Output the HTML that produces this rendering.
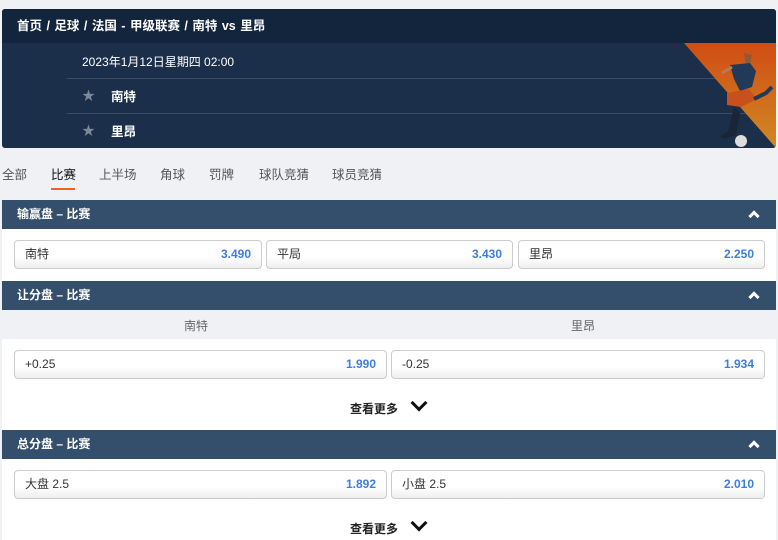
<!DOCTYPE html>
<html><head><meta charset="utf-8"><style>
*{margin:0;padding:0;box-sizing:border-box}
body{width:778px;height:540px;overflow:hidden;background:#f0f1f5;font-family:"Liberation Sans","Noto Sans CJK SC",sans-serif;font-size:12px;color:#222;position:relative}
.abs{position:absolute}
.hdr{left:2px;top:9px;width:774px;height:139px;background:#1b2e4a;border-radius:3px;overflow:hidden}
.bc{left:0;top:0;width:774px;height:34px;background:#13243d;color:#fff;font-weight:bold;font-size:12.5px;line-height:34px;padding-left:15px;word-spacing:1px}
.line{height:1px;background:#3a4d68;left:65px;width:709px}
.w{color:#fff}
.tab{top:164px;font-size:12.5px;color:#555}
.sec{left:2px;width:774px;height:29px;background:#344f6b;color:#fff;font-weight:bold;font-size:12px;line-height:29px;padding-left:15px}
.car{position:absolute;right:18px;top:12px;width:8px;height:8px;border-left:3px solid #fff;border-top:3px solid #fff;transform:rotate(45deg)}
.wh{left:2px;width:774px;background:#fff}
.btn{position:absolute;height:29px;border:1px solid #ccc;border-radius:4px;background:linear-gradient(#fff 60%,#eee);line-height:27px;padding:0 10px;font-size:12px;color:#333}
.btn b{float:right;color:#3b7de0;font-weight:bold}
.more{font-size:12px;font-weight:bold;color:#222}
.chev{display:inline-block;width:12px;height:12px;border-right:3px solid #111;border-bottom:3px solid #111;transform:rotate(45deg);margin-left:15px;position:relative;top:-4px}
.star{color:#7d8899;font-size:13px}
</style></head><body>
<div class="abs hdr">
<div class="abs bc">首页&nbsp;/&nbsp;足球&nbsp;/&nbsp;法国 - 甲级联赛&nbsp;/&nbsp;南特 vs 里昂</div>
<div class="abs w" style="left:80px;top:44px;font-size:12px">2023年1月12日星期四 02:00</div>
<div class="abs line" style="top:69px"></div>
<div class="abs line" style="top:104px"></div>
<div class="abs star" style="left:80px;top:76px">★</div>
<div class="abs w" style="left:109px;top:77px;font-weight:bold;font-size:12.5px">南特</div>
<div class="abs star" style="left:80px;top:111px">★</div>
<div class="abs w" style="left:109px;top:112px;font-weight:bold;font-size:12.5px">里昂</div>
<svg class="abs" style="left:680px;top:34px" width="94" height="105"><defs><linearGradient id="g" x1="0" y1="0" x2="0" y2="1"><stop offset="0" stop-color="#d14c14"/><stop offset="1" stop-color="#d08a22"/></linearGradient></defs><polygon points="2,0 94,0 94,105" fill="url(#g)"/>
<path d="M62,10 l8,2 -2,9 -4,1 z" fill="#8a5a3a"/><path d="M48,22 l20,-2 6,8 -4,16 -12,4 -6,-12 z" fill="#223a58"/><path d="M45,50 l22,-4 8,10 -16,8 -14,-2z" fill="#c8501a"/><path d="M52,64 l-6,25 -8,4 4,3 12,-4 4,-22z" fill="#1a2535"/><circle cx="59" cy="98" r="6" fill="#ddd"/><path d="M40,30 l10,-6" stroke="#b87b5a" stroke-width="3"/><path d="M72,56 l12,-6 6,-6" stroke="#223a58" stroke-width="4"/></svg>
</div>
<div class="abs tab" style="left:2px">全部</div>
<div class="abs tab" style="left:51px;color:#111">比赛</div>
<div class="abs" style="left:51px;top:188px;width:24px;height:2px;background:#f0621e"></div>
<div class="abs tab" style="left:99px">上半场</div>
<div class="abs tab" style="left:160px">角球</div>
<div class="abs tab" style="left:209px">罚牌</div>
<div class="abs tab" style="left:259px">球队竞猜</div>
<div class="abs tab" style="left:332px">球员竞猜</div>

<div class="abs sec" style="top:200px">输赢盘 – 比赛<span class="car"></span></div>
<div class="abs wh" style="top:229px;height:52px"></div>
<div class="btn" style="left:14px;top:240px;width:248px">南特<b>3.490</b></div>
<div class="btn" style="left:266px;top:240px;width:247px">平局<b>3.430</b></div>
<div class="btn" style="left:518px;top:240px;width:247px">里昂<b>2.250</b></div>

<div class="abs sec" style="top:281px">让分盘 – 比赛<span class="car"></span></div>
<div class="abs" style="left:184px;top:317px;color:#666">南特</div>
<div class="abs" style="left:571px;top:317px;color:#666">里昂</div>
<div class="abs wh" style="top:339px;height:91px"></div>
<div class="btn" style="left:14px;top:350px;width:373px">+0.25<b>1.990</b></div>
<div class="btn" style="left:391px;top:350px;width:374px">-0.25<b>1.934</b></div>
<div class="abs more" style="left:350px;top:400px">查看更多<span class="chev"></span></div>

<div class="abs sec" style="top:430px">总分盘 – 比赛<span class="car"></span></div>
<div class="abs wh" style="top:459px;height:81px"></div>
<div class="btn" style="left:14px;top:470px;width:373px">大盘 2.5<b>1.892</b></div>
<div class="btn" style="left:391px;top:470px;width:374px">小盘 2.5<b>2.010</b></div>
<div class="abs more" style="left:350px;top:520px">查看更多<span class="chev"></span></div>
</body></html>
